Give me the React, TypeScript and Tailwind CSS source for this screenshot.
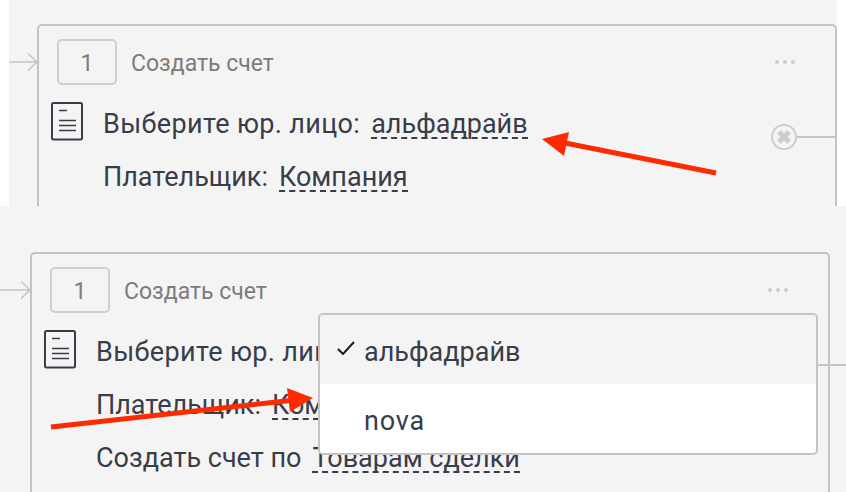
const font = "[font-family:'Roboto','Noto_Sans',sans-serif]";

function DocIcon() {
  return (
    <svg width="33" height="39" viewBox="0 0 33 39" fill="none" className="shrink-0 -mt-[6px] text-[#373d49]">
      <rect x="1" y="1" width="30" height="36.5" rx="1.5" stroke="currentColor" strokeWidth="2" />
      <path d="M8 8.5h8M8 18.5h17M8 23.5h17M8 28.5h17" stroke="currentColor" strokeWidth="1.5" />
    </svg>
  );
}

function Dashed({ children }: { children: React.ReactNode }) {
  return <span className="h-[31px] border-b-2 border-dashed border-[#373d49] inline-block whitespace-nowrap">{children}</span>;
}

function StepCard({ showClose, children }: { showClose?: boolean; children?: React.ReactNode }) {
  return (
    <div className="relative w-[800px] h-[400px] shrink-0 bg-[#f4f4f4] border-2 border-[#c4c4c4] rounded-[5px]">
      {/* вход слева */}
      <svg width="32" height="20" viewBox="0 0 32 20" fill="none" className="absolute left-[-32px] top-[26px] text-[#c4c4c4]">
        <path d="M0 10h30M21 1.5l9 8.5-9 8.5" stroke="currentColor" strokeWidth="1.5" />
      </svg>

      <div className="flex items-center pl-[18px] pt-[13px]">
        <div className="w-[60px] h-[46px] pt-[4px] flex items-center justify-center border-2 border-[#cfcfcf] rounded-[5px] text-[23px] text-[#7c7c7c]">1</div>
        <span className="ml-[14px] pt-[4px] text-[23px] text-[#7c7c7c]">Создать счет</span>
        <div className="ml-auto mr-[40px] flex gap-[4px]">
          <i className="size-[4px] rounded-full bg-[#cdcdcd]" />
          <i className="size-[4px] rounded-full bg-[#cdcdcd]" />
          <i className="size-[4px] rounded-full bg-[#cdcdcd]" />
        </div>
      </div>

      <div className="mt-[23px] text-[27px] leading-[33px] text-[#373d49]">
        <div className="flex items-start h-[53px] pl-[12px]">
          <DocIcon />
          <p className="ml-[19px] flex items-start gap-[11px] whitespace-nowrap">
            <span className="tracking-[0.35px]">Выберите юр. лицо:</span>
            <Dashed>альфадрайв</Dashed>
          </p>
        </div>
        <p className="h-[53px] pl-[64px] flex items-start gap-[11px]">Плательщик: <Dashed>Компания</Dashed></p>
        <p className="h-[53px] pl-[64px] flex items-start gap-[11px]">Создать счет по <Dashed>Товарам сделки</Dashed></p>
      </div>

      {showClose && (
        <div className="absolute left-[732px] top-[98px] flex items-center">
          <div className="size-[26px] flex items-center justify-center rounded-full border-2 border-[#cdcdcd]">
            <svg width="16" height="16" viewBox="0 0 16 16"><path d="M3 3l10 10M13 3L3 13" stroke="#cdcdcd" strokeWidth="5" /></svg>
          </div>
          <div className="w-[38px] h-[2px] bg-[#c4c4c4]" />
        </div>
      )}
      {children}
    </div>
  );
}

function Dropdown() {
  return (
    <div className="absolute left-[286px] top-[59px] w-[500px] h-[142px] overflow-hidden bg-white border-2 border-[#c4c4c4] rounded-[5px] text-[27px] text-[#373d49]">
      <div className="h-[69px] flex items-center bg-[#f4f4f4]">
        <svg width="20" height="14" viewBox="0 0 20 14" fill="none" className="ml-[17px] -mt-[4px]"><path d="M1 8l5 5L17 1" stroke="#1b1b1b" strokeWidth="2" /></svg>
        <span className="ml-[7px] pt-[5px]">альфадрайв</span>
      </div>
      <div className="h-[69px] flex items-center pl-[44px] pt-[5px] tracking-[0.8px]">nova</div>
    </div>
  );
}

export default function App() {
  return (
    <div className={`relative w-[846px] h-[492px] overflow-hidden bg-[#f4f4f4] ${font}`}>
      <div className="h-[206px] bg-white flex">
        <div className="ml-[9px] w-[828px] h-full overflow-hidden bg-[#f4f4f4] pl-[28px] pt-[24px]">
          <StepCard showClose />
        </div>
      </div>
      <div className="relative pl-[30px] pt-[46px]">
        <StepCard />
      </div>

      {/* выпадающий список поверх второй карточки */}
      <div className="absolute left-[30px] top-[252px] w-[800px] h-[240px]">
        <div className="absolute left-[788px] top-[112px] w-[28px] h-[2px] bg-[#c4c4c4]" />
        <div className="relative left-[2px] top-[2px]"><Dropdown /></div>
      </div>

      {/* красные стрелки */}
      <svg width="846" height="492" viewBox="0 0 846 492" className="absolute left-0 top-0 pointer-events-none">
        <path d="M716 173L560 142" stroke="#ff2a00" strokeWidth="5" />
        <path d="M542 139L569 132L564 156Z" fill="#ff2a00" />
        <path d="M51 427L295 400" stroke="#ff2a00" strokeWidth="5" />
        <path d="M313 398L287 388L290 412Z" fill="#ff2a00" />
      </svg>
    </div>
  );
}
